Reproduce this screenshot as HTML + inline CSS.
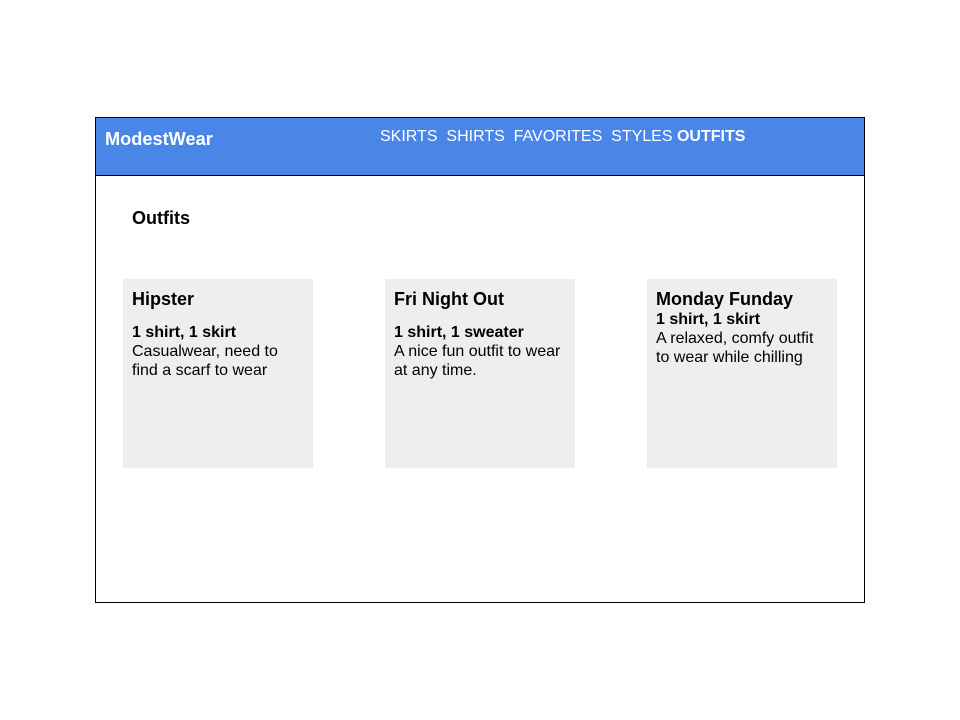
<!DOCTYPE html>
<html><head><style>
body{margin:0;width:960px;height:720px;background:#fff;font-family:"Liberation Sans",Arial,sans-serif;position:relative}
.frame{position:absolute;left:95px;top:117px;width:768px;height:484px;border:1px solid #000}
.hdr{position:absolute;left:0;top:0;width:768px;height:57px;background:#4a86e8;border-bottom:1px solid #000}
.logo{position:absolute;left:9px;top:11px;color:#fff;font-weight:bold;font-size:18.2px}
.nav{position:absolute;left:284px;top:10px;color:#fff;font-size:16px;white-space:pre}
.t{position:absolute;font-weight:bold;font-size:18px;color:#000}
.card{position:absolute;top:279px;width:190px;height:189px;background:#eeeeee}
.card h3{position:absolute;left:9px;top:10px;margin:0;font-size:18px}
.card p{position:absolute;left:9px;margin:0;font-size:16px;line-height:19px;width:173px}
</style></head><body>
<div class="frame">
<div class="hdr"><div class="logo">ModestWear</div><div class="nav">SKIRTS  SHIRTS  FAVORITES  STYLES <b>OUTFITS</b></div></div>
</div>
<div class="t" style="left:132px;top:208px">Outfits</div>
<div class="card" style="left:123px"><h3>Hipster</h3><p style="top:44px"><b>1 shirt, 1 skirt</b><br>Casualwear, need to<br>find a scarf to wear</p></div>
<div class="card" style="left:385px"><h3>Fri Night Out</h3><p style="top:44px"><b>1 shirt, 1 sweater</b><br>A nice fun outfit to wear<br>at any time.</p></div>
<div class="card" style="left:647px"><h3>Monday Funday</h3><p style="top:31px"><b>1 shirt, 1 skirt</b><br>A relaxed, comfy outfit<br>to wear while chilling</p></div>
</body></html>
